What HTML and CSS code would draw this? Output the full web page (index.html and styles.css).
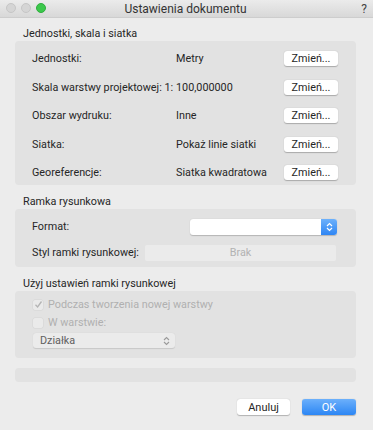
FILE: index.html
```html
<!DOCTYPE html>
<html lang="pl">
<head>
  <meta charset="UTF-8" />
  <title>Ustawienia dokumentu</title>
  <link rel="stylesheet" href="styles.css">
</head>
<body>
  <div class="window">
    <div class="titlebar">
      <div class="lights">
        <span class="light"></span>
        <span class="light"></span>
        <span class="light green"></span>
      </div>
      <div class="title">Ustawienia dokumentu</div>
      <div class="help">?</div>
    </div>

    <div class="content">
      <div class="section-label">Jednostki, skala i siatka</div>
      <div class="box units">
        <div class="row">
          <span class="label">Jednostki:</span>
          <span class="value">Metry</span>
          <button class="btn">Zmień...</button>
        </div>
        <div class="row">
          <span class="label">Skala warstwy projektowej: 1:</span>
          <span class="value">100,000000</span>
          <button class="btn">Zmień...</button>
        </div>
        <div class="row">
          <span class="label">Obszar wydruku:</span>
          <span class="value">Inne</span>
          <button class="btn">Zmień...</button>
        </div>
        <div class="row">
          <span class="label">Siatka:</span>
          <span class="value">Pokaż linie siatki</span>
          <button class="btn">Zmień...</button>
        </div>
        <div class="row">
          <span class="label">Georeferencje:</span>
          <span class="value">Siatka kwadratowa</span>
          <button class="btn">Zmień...</button>
        </div>
      </div>

      <div class="section-label">Ramka rysunkowa</div>
      <div class="box frame">
        <div class="frame-row">
          <span class="label">Format:</span>
          <div class="popup">
            <span class="popup-arrows">
              <svg width="7" height="10" viewBox="0 0 7 10"><path d="M1 4 L3.5 1.5 L6 4 M1 6 L3.5 8.5 L6 6" fill="none" stroke="#fff" stroke-width="1.2"/></svg>
            </span>
          </div>
        </div>
        <div class="frame-row">
          <span class="label">Styl ramki rysunkowej:</span>
          <div class="field">Brak</div>
        </div>
      </div>

      <div class="section-label">Użyj ustawień ramki rysunkowej</div>
      <div class="box use">
        <div class="check-row">
          <span class="check">
            <svg width="9" height="9" viewBox="0 0 9 9"><path d="M1.5 4.8 L3.6 7 L7.5 1.5" fill="none" stroke="#b4b4b4" stroke-width="1.3"/></svg>
          </span>
          <span>Podczas tworzenia nowej warstwy</span>
        </div>
        <div class="check-row">
          <span class="check"></span>
          <span>W warstwie:</span>
        </div>
        <div class="select">
          <span>Działka</span>
          <svg width="7" height="10" viewBox="0 0 7 10"><path d="M1 4 L3.5 1.5 L6 4 M1 6 L3.5 8.5 L6 6" fill="none" stroke="#9a9a9a" stroke-width="1.1"/></svg>
        </div>
      </div>

      <div class="box empty"></div>

      <div class="actions">
        <button class="btn big">Anuluj</button>
        <button class="btn big primary">OK</button>
      </div>
    </div>
  </div>
</body>
</html>
```

FILE: styles.css
```css
* {
  margin: 0;
  padding: 0;
  box-sizing: border-box;
  font-family: 'Roboto', 'Liberation Sans', sans-serif;
}

body {
  width: 373px;
  height: 430px;
  background: #ececec;
  overflow: hidden;
}

.window {
  width: 373px;
  height: 430px;
  background: #ececec;
  color: #262626;
  font-size: 10.8px;
  white-space: nowrap;
}

.titlebar {
  height: 18px;
  display: flex;
  align-items: center;
  background: linear-gradient(#ebebeb, #d8d8d8);
  border-bottom: 1px solid #cdcdcd;
  padding: 0 6px 0 6px;
}

.lights {
  display: flex;
  gap: 5px;
  width: 90px;
  margin-top: -2px;
}

.light {
  width: 10px;
  height: 10px;
  border-radius: 50%;
  background: #d5d5d5;
  border: 1px solid #c6c6c6;
}

.light.green {
  background: #3cc84c;
  border-color: #2fae3e;
}

.title {
  flex: 1;
  text-align: center;
  font-size: 12px;
  color: #333;
  padding-right: 2px;
}

.help {
  width: 90px;
  text-align: right;
  font-size: 12px;
  color: #444;
}

.content {
  padding: 8.5px 17px 0 15px;
  display: flex;
  flex-direction: column;
}

.section-label {
  padding-left: 8px;
  height: 13px;
  line-height: 13px;
  margin-bottom: 1px;
}

.box {
  background: #e2e2e2;
  border-radius: 4px;
  margin-bottom: 10px;
}

.units {
  padding: 6px 18px 0 17px;
  display: flex;
  flex-direction: column;
  gap: 4.5px;
}

.row {
  display: grid;
  grid-template-columns: 144px 1fr 54px;
  align-items: center;
  height: 24px;
}

.btn {
  background: #fff;
  border: none;
  border-radius: 3px;
  height: 15px;
  font-size: 10.8px;
  color: #262626;
  box-shadow: 0 0.5px 1px rgba(0, 0, 0, 0.25);
}

.frame {
  padding: 9.5px 20px 5.5px 17px;
  display: flex;
  flex-direction: column;
  gap: 9px;
}

.frame-row {
  display: flex;
  align-items: center;
  justify-content: space-between;
  height: 17px;
}

.popup {
  width: 147px;
  height: 16px;
  background: #fff;
  border-radius: 3px;
  box-shadow: 0 0.5px 1px rgba(0, 0, 0, 0.2);
  display: flex;
  justify-content: flex-end;
  margin-right: -1px;
}

.popup-arrows {
  width: 16px;
  height: 16px;
  background: linear-gradient(#6db1fb, #2f86f4);
  border-radius: 0 3px 3px 0;
  display: flex;
  align-items: center;
  justify-content: center;
}

.field {
  width: 191px;
  height: 16px;
  line-height: 16px;
  background: #ebebeb;
  border-radius: 2px;
  text-align: center;
  color: #b2b2b2;
}

.use {
  padding: 6.5px 18px 10px 18px;
  color: #b0b0b0;
  display: flex;
  flex-direction: column;
  gap: 3px;
}

.check-row {
  display: flex;
  align-items: center;
  gap: 5px;
  height: 15px;
}

.check {
  width: 10px;
  height: 10px;
  border-radius: 2px;
  background: #eaeaea;
  box-shadow: 0 0 0 0.5px #d4d4d4;
  display: flex;
  align-items: center;
  justify-content: center;
}

.select {
  width: 142px;
  height: 15px;
  background: #ebebeb;
  border-radius: 3px;
  box-shadow: 0 0.5px 1px rgba(0, 0, 0, 0.12);
  display: flex;
  align-items: center;
  justify-content: space-between;
  padding: 0 5px 0 7px;
  color: #606060;
}

.empty {
  height: 14px;
  margin-top: 0;
  margin-bottom: 17px;
}

.actions {
  display: flex;
  justify-content: flex-end;
  gap: 12px;
}

.btn.big {
  width: 53px;
  height: 16px;
  font-size: 11px;
}

.btn.primary {
  width: 54px;
  color: #fff;
  background: linear-gradient(#6cb0fb, #2c86f4);
}
```
